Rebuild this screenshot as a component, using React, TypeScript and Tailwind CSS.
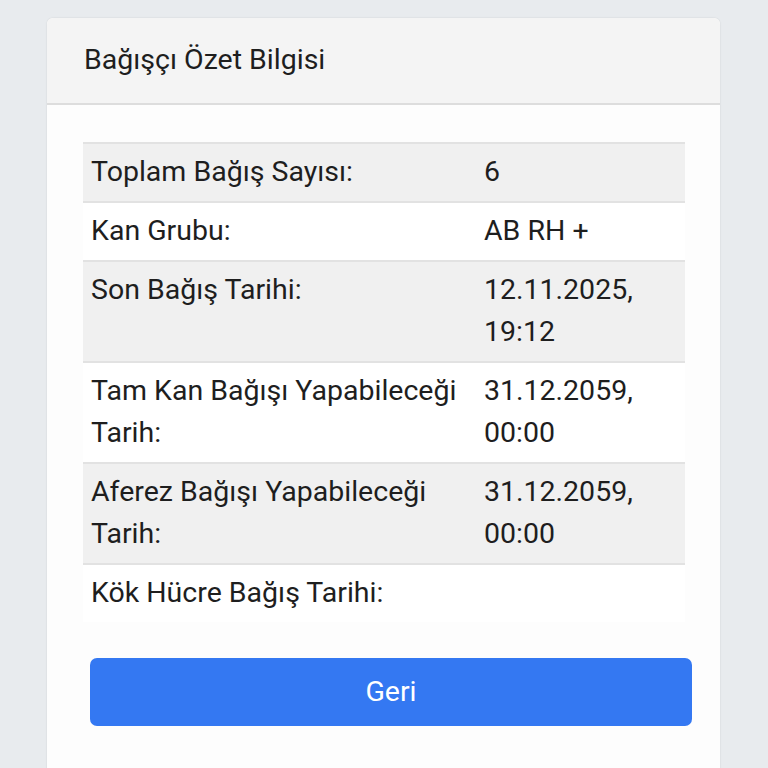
import React from "react";

const rows: { label: string; value: React.ReactNode; striped: boolean }[] = [
  { label: "Toplam Bağış Sayısı:", value: "6", striped: true },
  { label: "Kan Grubu:", value: "AB RH +", striped: false },
  { label: "Son Bağış Tarihi:", value: <>12.11.2025,<br />19:12</>, striped: true },
  { label: "Tam Kan Bağışı Yapabileceği Tarih:", value: <>31.12.2059,<br />00:00</>, striped: false },
  { label: "Aferez Bağışı Yapabileceği Tarih:", value: <>31.12.2059,<br />00:00</>, striped: true },
  { label: "Kök Hücre Bağış Tarihi:", value: "", striped: false },
];

export default function App() {
  return (
    <div
      className="min-h-[768px] w-full bg-[#e8ebee] pt-[18px] pl-[47px] overflow-hidden"
      style={{ fontFamily: "Roboto, 'Noto Sans', sans-serif" }}
    >
      <div className="w-[673px] min-h-[760px] bg-[#fdfdfd] rounded-t-[6px] shadow-[0_0_2px_rgba(0,0,0,0.12)]">
        <div className="h-[87px] bg-[#f4f4f4] border-b-2 border-[#dddddd] rounded-t-[6px] pl-[37px] flex items-center">
          <span className="text-[28.5px] leading-[42px] text-[#1e1e1e] pb-[1px]">Bağışçı Özet Bilgisi</span>
        </div>
        <div className="pt-[37px] pl-[36px] pr-[35px]">
          <div className="w-[602px] border-t-2 border-[#e2e2e2]">
            {rows.map((r, i) => (
              <div
                key={i}
                className={`flex text-[28.5px] leading-[42px] text-[#1e1e1e] ${r.striped ? "bg-[#f0f0f0]" : "bg-white"} ${i < rows.length - 1 ? "border-b-2 border-[#e2e2e2]" : ""} pt-[7px] pb-[8px]`}
              >
                <div className="w-[393px] shrink-0 px-[8px]">{r.label}</div>
                <div className="flex-1 px-[8px]">{r.value}</div>
              </div>
            ))}
          </div>
          <button className="mt-[36px] ml-[7px] w-[602px] h-[68px] rounded-[7px] bg-[#3478f2] text-white text-[28.5px] leading-[42px] flex items-center justify-center">
            Geri
          </button>
        </div>
      </div>
    </div>
  );
}
